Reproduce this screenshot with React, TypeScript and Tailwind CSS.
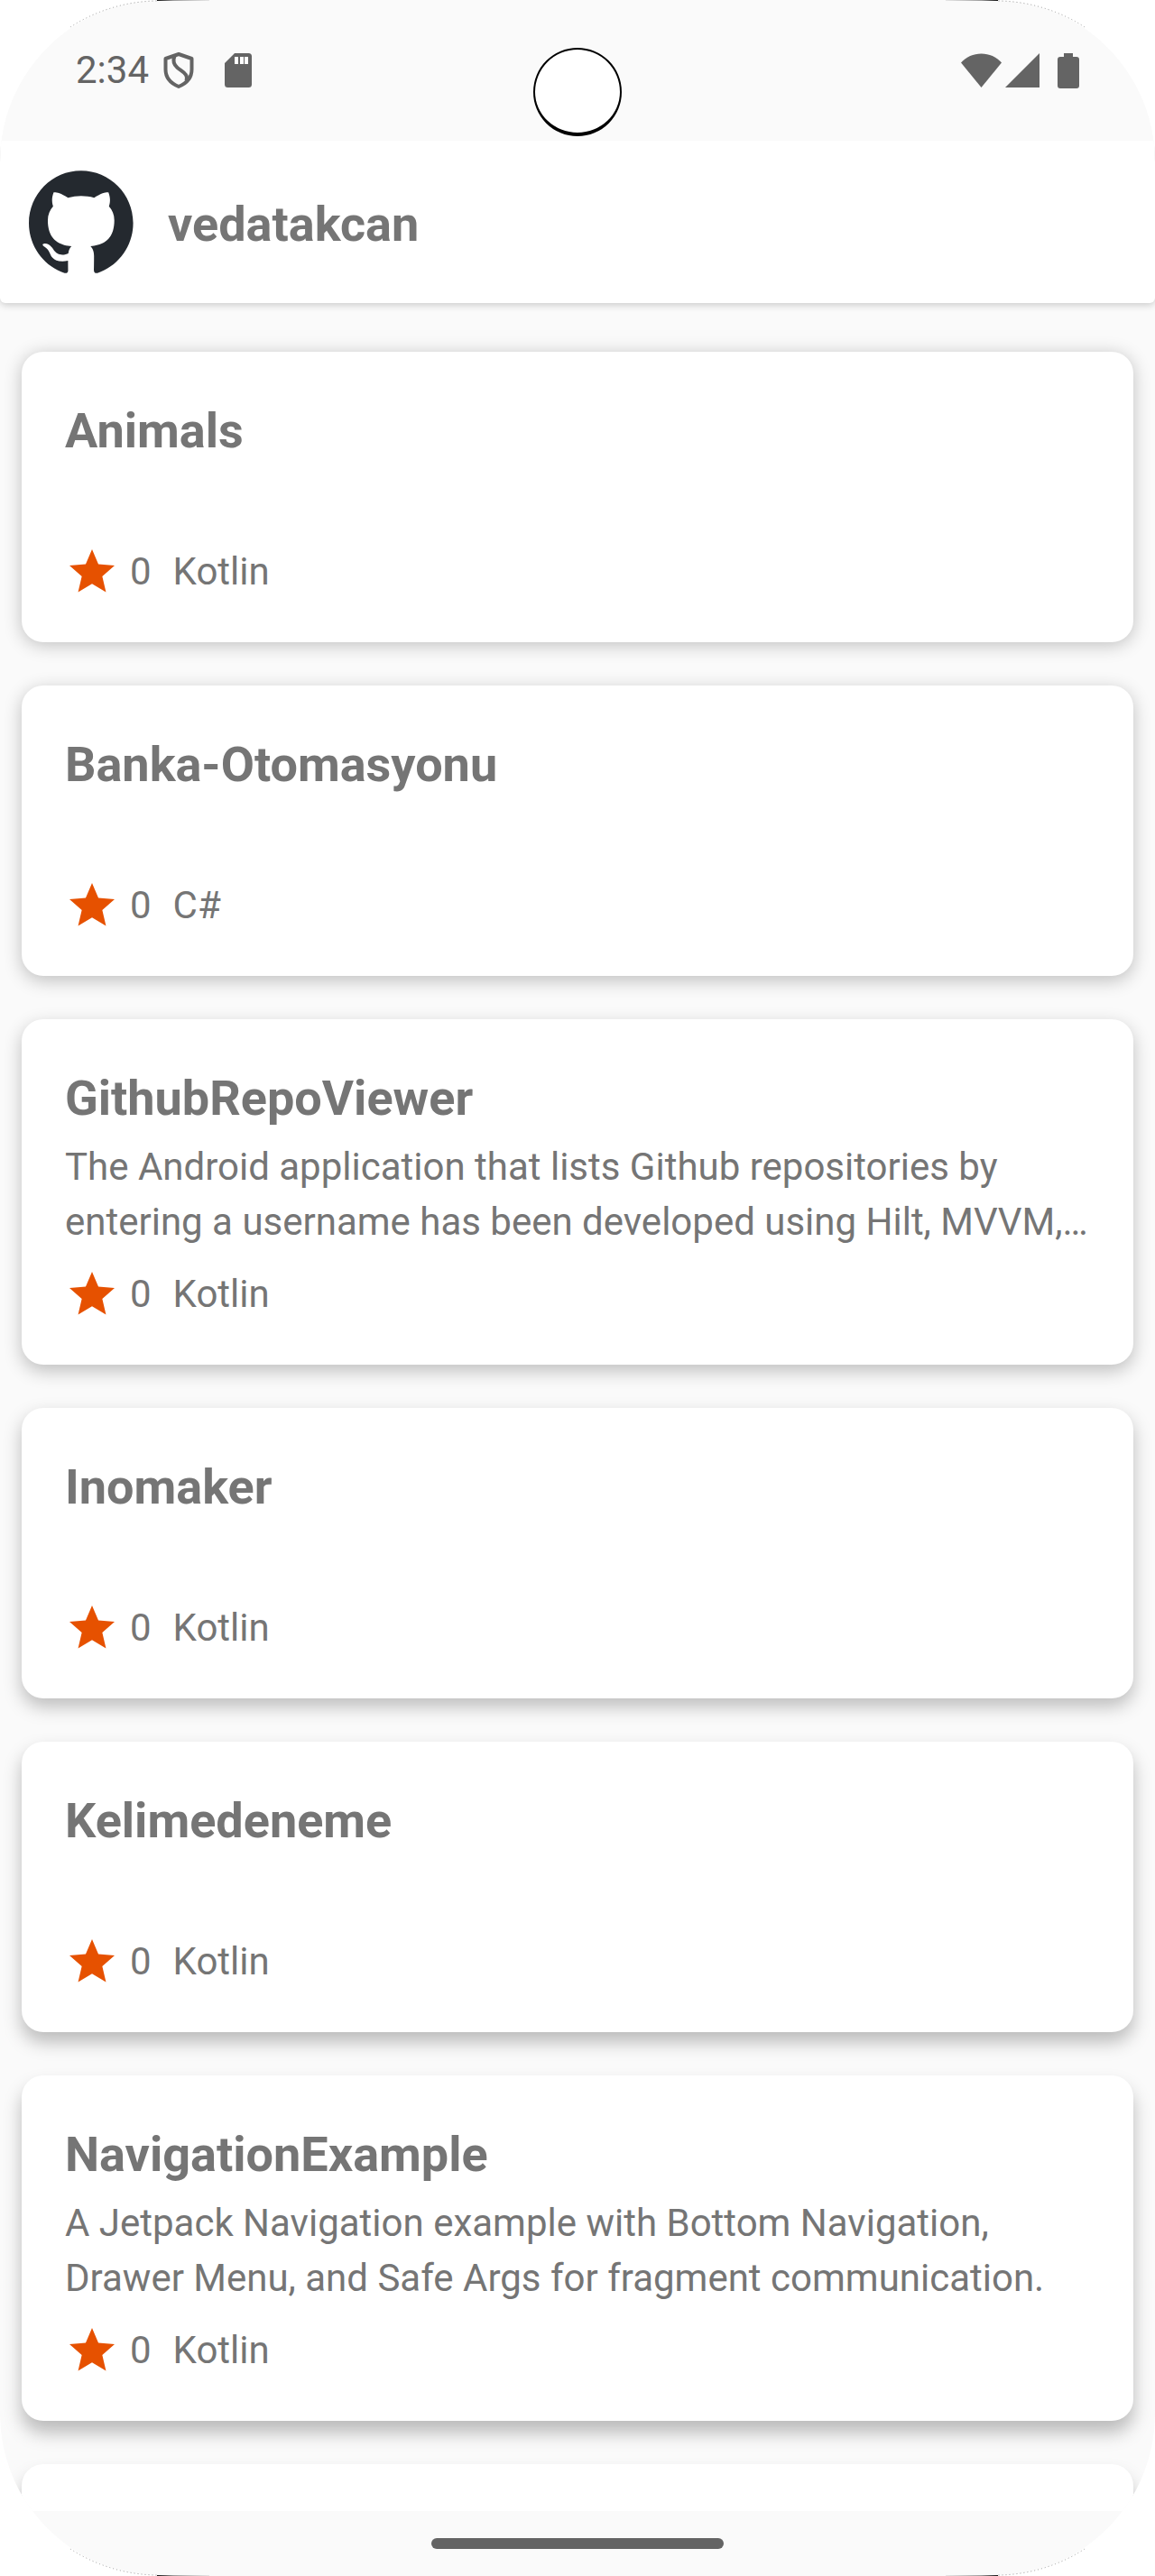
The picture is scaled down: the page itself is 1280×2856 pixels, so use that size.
type Repo = { name: string; description?: string[]; stars: number; language: string; shadow: string };

const repos: Repo[] = [
  { name: "Animals", stars: 0, language: "Kotlin", shadow: "shadow-[0_3px_20px_rgba(0,0,0,0.24)]" },
  { name: "Banka-Otomasyonu", stars: 0, language: "C#", shadow: "shadow-[0_5px_20px_rgba(0,0,0,0.24)]" },
  {
    name: "GithubRepoViewer",
    description: [
      "The Android application that lists Github repositories by",
      "entering a username has been developed using Hilt, MVVM,…",
    ],
    stars: 0,
    language: "Kotlin",
    shadow: "shadow-[0_7px_20px_rgba(0,0,0,0.24)]",
  },
  { name: "Inomaker", stars: 0, language: "Kotlin", shadow: "shadow-[0_9px_20px_rgba(0,0,0,0.25)]" },
  { name: "Kelimedeneme", stars: 0, language: "Kotlin", shadow: "shadow-[0_11px_20px_rgba(0,0,0,0.26)]" },
  {
    name: "NavigationExample",
    description: [
      "A Jetpack Navigation example with Bottom Navigation,",
      "Drawer Menu, and Safe Args for fragment communication.",
    ],
    stars: 0,
    language: "Kotlin",
    shadow: "shadow-[0_13px_20px_rgba(0,0,0,0.26)]",
  },
];

function ShieldIcon() {
  return (
    <svg width="34" height="42" viewBox="0 0 34 42" fill="none" stroke="#646464" strokeWidth="4" strokeLinejoin="round" aria-hidden="true">
      <path d="M17 3 31.500 8v12c0 9-6 15.500-14.500 19C8.500 35.500 2.500 29 2.500 20V8Z" />
      <path d="M12.500 5c-2 5-1.500 9 3 13 5 4.500 13 7 10 15" />
    </svg>
  );
}

function SdCardIcon() {
  return (
    <svg width="30" height="38" viewBox="0 0 30 38" aria-hidden="true">
      <path fill="#646464" d="M11 0h15.500A3.500 3.500 0 0 1 30 3.500v31a3.500 3.500 0 0 1-3.500 3.500h-23A3.500 3.500 0 0 1 0 34.500V11Z" />
      <path fill="#fff" d="M11 4h4v8h-4zM17 4h4v8h-4zM22 4h4v8h-4z" />
    </svg>
  );
}

function WifiIcon() {
  return (
    <svg width="45" height="38" viewBox="0 0 46 38" preserveAspectRatio="none" fill="#646464" aria-hidden="true">
      <path d="M23 38 0 10.500C6 4 14 .5 23 .5S40 4 46 10.500Z" />
    </svg>
  );
}

function SignalIcon() {
  return (
    <svg width="38" height="38" viewBox="0 0 38 38" fill="#646464" aria-hidden="true">
      <path d="M38 0v38H0Z" />
    </svg>
  );
}

function BatteryIcon() {
  return (
    <svg width="24" height="39" viewBox="0 0 24 39" fill="#646464" aria-hidden="true">
      <path d="M7 0h10v4h4a3 3 0 0 1 3 3v29a3 3 0 0 1-3 3H3a3 3 0 0 1-3-3V7a3 3 0 0 1 3-3h4Z" />
    </svg>
  );
}

function GithubMark() {
  return (
    <svg width="116" height="114" viewBox="0 0 98 96" aria-hidden="true">
      <path
        fill="#24292f"
        fillRule="evenodd"
        clipRule="evenodd"
        d="M48.854 0C21.839 0 0 22 0 49.217c0 21.756 13.993 40.172 33.405 46.690 2.427.490 3.316-1.059 3.316-2.362 0-1.141-.080-5.052-.080-9.127-13.590 2.934-16.420-5.867-16.420-5.867-2.184-5.704-5.420-7.170-5.420-7.170-4.448-3.015.324-3.015.324-3.015 4.934.326 7.523 5.052 7.523 5.052 4.367 7.496 11.404 5.378 14.235 4.074.404-3.178 1.699-5.378 3.074-6.600-10.839-1.141-22.243-5.378-22.243-24.283 0-5.378 1.940-9.778 5.014-13.200-.485-1.222-2.184-6.275.486-13.038 0 0 4.125-1.304 13.426 5.052a46.970 46.970 0 0 1 12.214-1.630c4.125 0 8.330.571 12.213 1.630 9.302-6.356 13.427-5.052 13.427-5.052 2.670 6.763.970 11.816.485 13.038 3.155 3.422 5.015 7.822 5.015 13.200 0 18.905-11.404 23.060-22.324 24.283 1.780 1.548 3.316 4.481 3.316 9.126 0 6.600-.080 11.897-.080 13.526 0 1.304.890 2.853 3.316 2.364 19.412-6.520 33.405-24.935 33.405-46.691C97.707 22 75.788 0 48.854 0z"
      />
    </svg>
  );
}

function StarIcon() {
  return (
    <svg width="60" height="60" viewBox="0 0 24 24" fill="#e65100" role="img" aria-label="Stars">
      <path d="M12 17.270 18.180 21l-1.640-7.030L22 9.240l-7.190-.61L12 2 9.190 8.630 2 9.240l5.460 4.730L5.820 21Z" />
    </svg>
  );
}

/* Thin bezel line that follows one rounded corner of the screen. */
function CornerEdge({ className }: { className: string }) {
  return (
    <svg width="240" height="60" viewBox="0 0 240 60" fill="none" className={`pointer-events-none absolute z-30 ${className}`} aria-hidden="true">
      <defs>
        <linearGradient id="edge" gradientUnits="userSpaceOnUse" x1="174" y1="0" x2="234" y2="0">
          <stop offset="0" stopColor="#111" />
          <stop offset="0.3" stopColor="#999" />
          <stop offset="1" stopColor="#bbb" stopOpacity="0.3" />
        </linearGradient>
      </defs>
      <path d="M78 30A180 180 0 0 1 174 1" stroke="#999" strokeWidth="1" strokeDasharray="1 3" />
      <path d="M174 0h58v1h-58z" fill="url(#edge)" />
    </svg>
  );
}

function RepoCard({ repo }: { repo: Repo }) {
  return (
    <li className={`shrink-0 rounded-3xl bg-white p-12 ${repo.shadow}`}>
      <h2 className="text-[54px] leading-[80px] font-bold">{repo.name}</h2>
      <p className="mt-[5px] min-h-[61px] text-[42px] leading-[61px]">
        {repo.description?.map((line) => (
          <span key={line} className="block">
            {line}
          </span>
        ))}
      </p>
      <div className="mt-5 flex items-center text-[42px] leading-[60px]">
        <StarIcon />
        <span className="ml-3">{repo.stars}</span>
        <span className="ml-6">{repo.language}</span>
      </div>
    </li>
  );
}

export default function App() {
  return (
    <div className="h-screen bg-white font-[Roboto,sans-serif] text-[#757575]">
      <div className="relative flex h-full flex-col overflow-hidden rounded-[180px] bg-[#fafafa]">
        <div className="relative z-20 flex h-[156px] shrink-0 items-center justify-between bg-[#fafafa] px-[84px] text-[#646464]">
          <div className="flex items-center">
            <span className="text-[42px] leading-[60px]">2:34</span>
            <span className="ml-4">
              <ShieldIcon />
            </span>
            <span className="ml-[34px]">
              <SdCardIcon />
            </span>
          </div>
          <div className="flex items-center">
            <WifiIcon />
            <span className="ml-1">
              <SignalIcon />
            </span>
            <span className="ml-5">
              <BatteryIcon />
            </span>
          </div>
          <div className="absolute top-[53px] left-1/2 size-[98px] -translate-x-1/2 rounded-full border-2 border-b-4 border-black bg-white" />
        </div>

        <header className="relative z-10 flex shrink-0 items-start rounded-b-md bg-white px-8 pt-[33px] pb-[27px] shadow-[0_2px_8px_rgba(0,0,0,0.2)]">
          <GithubMark />
          <h1 className="ml-[38px] text-[54px] leading-[120px] font-bold">vedatakcan</h1>
        </header>

        <main className="min-h-0 flex-1 overflow-hidden">
          <ul className="flex flex-col gap-12 px-6 pt-[54px]">
            {repos.map((repo) => (
              <RepoCard key={repo.name} repo={repo} />
            ))}
            <li aria-hidden="true" className="h-[322px] shrink-0 rounded-3xl bg-white shadow-[0_14px_20px_rgba(0,0,0,0.26)]" />
          </ul>
        </main>

        <div className="flex h-[72px] shrink-0 items-center justify-center">
          <div className="h-3 w-[324px] rounded-full bg-[#646464]" />
        </div>
      </div>
      <CornerEdge className="top-0 left-0" />
      <CornerEdge className="top-0 right-0 -scale-x-100" />
      <CornerEdge className="bottom-0 left-0 -scale-y-100" />
      <CornerEdge className="right-0 bottom-0 -scale-100" />
    </div>
  );
}
